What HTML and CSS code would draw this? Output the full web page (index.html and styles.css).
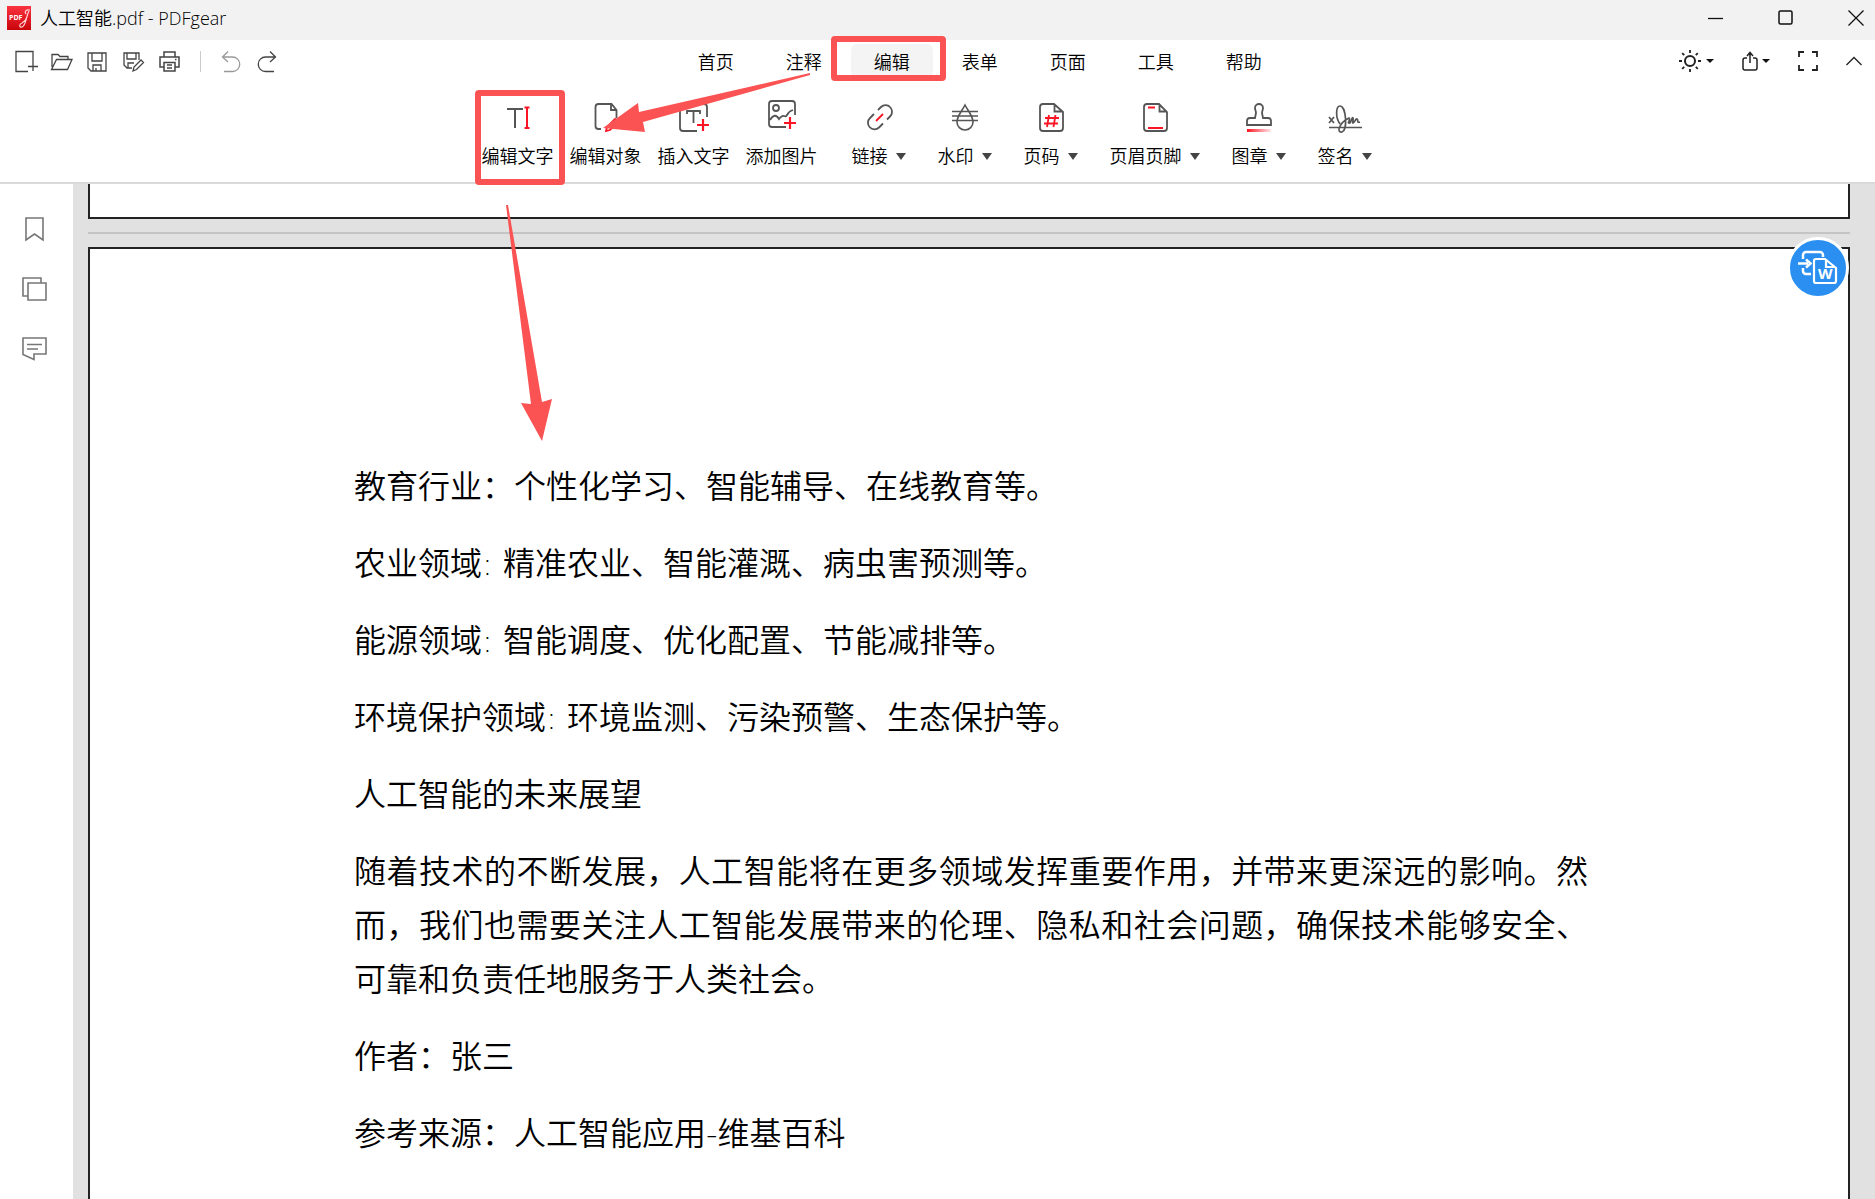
FILE: index.html
```html
<!DOCTYPE html>
<html lang="zh-CN">
<head>
    <meta charset="UTF-8">
    <meta name="viewport" content="width=device-width, initial-scale=1.0">
    <title>人工智能.pdf - PDFgear</title>
    <link rel="stylesheet" href="styles.css">
</head>
<body>

<div class="app">
    <header class="titlebar">
        <svg class="logo" width="24" height="24" viewBox="0 0 24 24">
            <defs>
                <linearGradient id="logo-red" x1="0" y1="0" x2="0" y2="1">
                    <stop offset="0" stop-color="#fb3440"/>
                    <stop offset="1" stop-color="#c90409"/>
                </linearGradient>
            </defs>
            <rect width="24" height="24" fill="url(#logo-red)"/>
            <text x="2" y="14" class="logo-text">PDF</text>
            <path d="M23 4c-4-1-6 2-4 4M22 5c-3 5-3 15-7 16-3 1-3-3 0-4 2-1 4-3 5-6" fill="none" stroke="#ffd5d5" stroke-width="1.2"/>
        </svg>
        <span class="title">人工智能.pdf - PDFgear</span>
        <div class="window-btns">
            <button aria-label="最小化"><svg width="16" height="16"><path d="M0 8.5h15"/></svg></button>
            <button aria-label="最大化"><svg width="16" height="16"><rect x="1" y="1" width="13" height="13" rx="1.5" stroke-width="1.5"/></svg></button>
            <button aria-label="关闭"><svg width="16" height="16"><path d="M.5 .5l15 15M15.5 .5l-15 15"/></svg></button>
        </div>
    </header>

    <div class="menubar">
        <div class="quick">
            <button aria-label="新建"><svg width="24" height="24"><path d="M20 12V2.500H3v20h12M20 12v10M15 17.500h10"/></svg></button>
            <button aria-label="打开"><svg width="24" height="24"><path d="M3 18V5.500h6l2 2h8v3M2.500 20.500l5-10h15.500l-4.500 10z"/></svg></button>
            <button aria-label="保存"><svg width="24" height="24"><path d="M3 4h18v18H6l-3-3zM7 4v8h10V4M8 22v-6h8v6M11 19v3"/></svg></button>
            <button aria-label="另存为"><svg width="24" height="24"><path d="M11 19H6l-3-3V4h15v7M6 4v6h9V4M7 19v-5h6M12 22l1-4 7-7 2.500 2.500-7 7z"/></svg></button>
            <button aria-label="打印"><svg width="24" height="24"><path d="M7 8V3h11v5M7 18H3V8h19v10h-4M7 13.500h11V22H7zM10 16h5M10 19h5M18 10.500h1.500" stroke-width="1.5"/></svg></button>
            <span class="divider"></span>
            <button aria-label="撤销" disabled><svg width="24" height="24"><path d="M9 2.500L3.500 8 9 13M4 8h9.500a7 7 0 010 14.500H5"/></svg></button>
            <button aria-label="重做"><svg width="24" height="24"><path d="M15 2.500L20.500 8 15 13M20 8h-9.500a7 7 0 000 14.500H19"/></svg></button>
        </div>
        <nav class="tabs">
            <button>首页</button>
            <button>注释</button>
            <button class="active">编辑</button>
            <button>表单</button>
            <button>页面</button>
            <button>工具</button>
            <button>帮助</button>
        </nav>
        <div class="view-btns">
            <button aria-label="主题">
                <svg width="24" height="24"><circle cx="12" cy="12" r="5" stroke-width="2"/><path d="M12 1v3M12 20v3M1 12h3M20 12h3M4.200 4.200l2 2M17.800 17.800l2 2M4.200 19.800l2-2M17.800 6.200l2-2" stroke-width="1.8"/></svg>
                <i class="caret small"></i>
            </button>
            <button aria-label="分享">
                <svg width="16" height="20"><path d="M5 7H3a2 2 0 00-2 2v8a2 2 0 002 2h10a2 2 0 002-2V9a2 2 0 00-2-2h-2M8 12V2M5 5l3-3.500L11 5" stroke-width="1.5"/></svg>
                <i class="caret small"></i>
            </button>
            <button aria-label="全屏"><svg width="20" height="20"><path d="M1 6V1h5M14 1h5v5M19 14v5h-5M6 19H1v-5" stroke-width="1.8"/></svg></button>
            <button aria-label="收起"><svg width="16" height="10"><path d="M.5 9L8 1.500 15.500 9"/></svg></button>
        </div>
    </div>

    <div class="ribbon">
        <div class="group">
            <button>
                <svg width="34" height="34"><path d="M6 9h16M14 9v19" stroke-width="2"/><path class="red" d="M23.500 7.500h5M23.500 28h5M26 7.500V28" stroke-width="2"/></svg>
                <span>编辑文字</span>
            </button>
            <button>
                <svg width="34" height="34"><path d="M12 29H9.500a3 3 0 01-3-3V7a3 3 0 013-3h13l5 6v8M22 4v6h6"/><path class="red" d="M17 31l1-4 8-8 3 3-8 8z"/></svg>
                <span>编辑对象</span>
            </button>
            <button>
                <svg width="34" height="34"><path d="M20 31H6a3 3 0 01-3-3V7a3 3 0 013-3h21a3 3 0 013 3v10M10 14v-3h13v3M16.500 11v12"/><path class="red" d="M20 25h12M26 19v12" stroke-width="2.2"/></svg>
                <span>插入文字</span>
            </button>
            <button>
                <svg width="34" height="34"><path d="M21 27H7a3 3 0 01-3-3V4a3 3 0 013-3h20a3 3 0 013 3v11M5 20q5-8 9-1 3-4 5-3 2 1 3-1 2-4 6-5"/><circle cx="11" cy="8" r="3"/><path class="red" d="M19 23h12M25 17v12" stroke-width="2.2"/></svg>
                <span>添加图片</span>
            </button>
        </div>
        <div class="group">
            <button class="drop">
                <svg width="34" height="34"><path d="M16 10l3-3a6.500 6.500 0 019 9.500l-3 3M12 14l-4 4a6.500 6.500 0 009 9.500l4-4"/><path class="red" d="M14 21l7-7"/></svg>
                <span>链接 <i class="caret"></i></span>
            </button>
            <button class="drop">
                <svg width="34" height="34"><path d="M17 5c-3 6-8 11-8 17a8 8 0 0016 0c0-6-5-11-8-17zM4 11.500h26M4 16h26M4 20.500h26" stroke-width="1.6"/></svg>
                <span>水印 <i class="caret"></i></span>
            </button>
            <button class="drop">
                <svg width="34" height="34"><path d="M20 4H9a3 3 0 00-3 3v21a3 3 0 003 3h17a3 3 0 003-3V12zM20.500 4v7.500H29"/><path class="red" d="M15 15l-2 12M21.500 15l-2 12M11 18h14M10 23.500h14" stroke-width="1.8"/></svg>
                <span>页码 <i class="caret"></i></span>
            </button>
            <button class="drop">
                <svg width="34" height="34"><path d="M21 4H9a3 3 0 00-3 3v21a3 3 0 003 3h17a3 3 0 003-3V12zM21.500 4v7.500H29"/><path class="red" d="M10 7.500h7M10 28h15" stroke-width="2"/></svg>
                <span>页眉页脚 <i class="caret"></i></span>
            </button>
            <button class="drop">
                <svg width="34" height="34">
                    <defs>
                        <linearGradient id="stamp-red">
                            <stop offset="0" stop-color="#fb1424"/>
                            <stop offset="1" stop-color="#fb1424" stop-opacity=".1"/>
                        </linearGradient>
                    </defs>
                    <path d="M14 13c0-2-1-3-1-5a4 4 0 018 0c0 2-1 3-1 5l1 5h5a3 3 0 013 3v4H5v-4a3 3 0 013-3h5z"/>
                    <rect x="5" y="29" width="24" height="3" fill="url(#stamp-red)" stroke="none"/>
                </svg>
                <span>图章 <i class="caret"></i></span>
            </button>
            <button class="drop">
                <svg width="34" height="34"><path d="M1 27.500h33M1 17l5 6M6 17l-5 6M12 24C7 17 8 6 12 6c6 0 8 24 2 26-6 1-3-9 7-14 2 2-2 5 0 5 2 1 3-7 4-5 1 1-1 5 0 5 2-1 3-5 4-4 2 1-1 4 3 3" stroke-width="1.7"/></svg>
                <span>签名 <i class="caret"></i></span>
            </button>
        </div>
    </div>

    <div class="workspace">
        <aside class="sidebar">
            <button aria-label="书签"><svg width="26" height="26"><path d="M5 2h17v22l-8.500-6L5 24z"/></svg></button>
            <button aria-label="缩略图"><svg width="26" height="26"><path d="M7 20H2V2h18v5M7 7h18v17H7z"/></svg></button>
            <button aria-label="批注"><svg width="26" height="26"><path d="M2 2h23v16H13v5.500L2 18.500zM6 8.500h15M6 13h11"/></svg></button>
        </aside>
        <main class="canvas">
            <div class="page page-prev"></div>
            <hr>
            <article class="page">
                <p>教育行业：个性化学习、智能辅导、在线教育等。</p>
                <p>农业领域: 精准农业、智能灌溉、病虫害预测等。</p>
                <p>能源领域: 智能调度、优化配置、节能减排等。</p>
                <p>环境保护领域: 环境监测、污染预警、生态保护等。</p>
                <p>人工智能的未来展望</p>
                <p>随着技术的不断发展，人工智能将在更多领域发挥重要作用，并带来更深远的影响。然而，我们也需要关注人工智能发展带来的伦理、隐私和社会问题，确保技术能够安全、可靠和负责任地服务于人类社会。</p>
                <p>作者：张三</p>
                <p>参考来源：人工智能应用-维基百科</p>
            </article>
            <button class="convert" aria-label="转换为 Word">
                <svg width="42" height="36">
                    <path d="M6 9V5a3 3 0 013-3h14a3 3 0 013 3v2M6 18v3a3 3 0 003 3h5M1 13.500h10M9 9.500l4.500 4-4.500 4" stroke-width="2.5"/>
                    <path d="M28 9H19a2 2 0 00-2 2v20a2 2 0 002 2h18a2 2 0 002-2V18zM29 9v8h9" stroke-width="2.2"/>
                    <text x="21" y="29" class="convert-w">W</text>
                </svg>
            </button>
        </main>
    </div>
</div>

<!-- 标注 -->
<svg class="marks" width="960" height="450">
    <rect x="478" y="93" width="84" height="89" rx="1"/>
    <rect x="834" y="39" width="109" height="39" rx="1"/>
    <path d="M810 73L639 112 638 103 603 128 645 132 643 122 810 75z"/>
    <path d="M506 205L531 404 521 403 542 441 552 399 542 402 508 205z"/>
</svg>

</body>
</html>
```
FILE: styles.css
```css
* {
    box-sizing: border-box;
}
body {
    margin: 0;
    font-family: "Open Sans", "Noto Sans CJK SC", sans-serif;
    font-size: 18px;
    color: #000;
}
button {
    display: flex;
    align-items: center;
    justify-content: center;
    padding: 0;
    border: none;
    background: none;
    font: inherit;
    color: inherit;
    cursor: pointer;
}
svg {
    display: block;
    overflow: visible;
    fill: none;
    stroke: #444;
    stroke-width: 1.3;
}
svg text {
    stroke: none;
    fill: #fff;
}
.app {
    display: flex;
    flex-direction: column;
    height: 100vh;
    overflow: hidden;
}

/* 标题栏 */
.titlebar {
    display: flex;
    align-items: center;
    flex: none;
    height: 40px;
    padding: 0 11px 5px 7px;
    background: #f2f2f2;
}
.logo {
    stroke: none;
}
.logo-text {
    font-family: "Open Sans", sans-serif;
    font-size: 7px;
    font-weight: 700;
}
.title {
    margin-left: 9px;
    font-weight: 350;
    line-height: 24px;
}
.window-btns {
    display: flex;
    gap: 54px;
    margin-left: auto;
}
.window-btns svg {
    stroke: #111;
}

/* 菜单 */
.menubar {
    display: grid;
    grid-template-columns: 8fr auto 7fr;
    align-items: center;
    flex: none;
    height: 42px;
    background: #fff;
}
.quick {
    display: flex;
    align-items: center;
    gap: 12px;
    padding-left: 13px;
}
.quick button:disabled svg {
    stroke: #999;
}
.divider {
    width: 1px;
    height: 21px;
    margin: 0 6px 0 7px;
    background: #ccc;
}
.tabs {
    display: flex;
    gap: 6px;
}
.tabs button {
    width: 82px;
    height: 34px;
    border-radius: 6px;
    font-weight: 350;
}
.tabs .active {
    background: #f4f4f4;
}
.view-btns {
    display: flex;
    align-items: center;
    justify-content: flex-end;
    gap: 28px;
    padding-right: 13px;
}
.view-btns button {
    gap: 4px;
}
.view-btns svg {
    stroke: #222;
}
.caret {
    display: inline-block;
    border: 5px solid transparent;
    border-top: 7px solid #444;
    border-bottom: 0;
}
.caret.small {
    border-width: 4px 4px 0;
    border-top-color: #111;
}

/* 功能区 */
.ribbon {
    display: flex;
    justify-content: center;
    gap: 14px;
    flex: none;
    height: 102px;
    padding: 18px 14px 0 0;
    border-bottom: 2px solid #d9d9d9;
    background: #fff;
}
.group {
    display: flex;
    gap: 4px;
}
.ribbon button {
    flex-direction: column;
    justify-content: flex-start;
    gap: 8px;
    height: 80px;
    padding: 0 6px;
    font-weight: 350;
    line-height: 28px;
}
.ribbon .drop {
    padding: 0 14px;
}
.ribbon span {
    display: flex;
    align-items: center;
    gap: 8px;
}
.ribbon svg {
    stroke: #555;
    stroke-width: 1.8;
}
.ribbon .red {
    stroke: #fb1424;
}

/* 文档区 */
.workspace {
    display: flex;
    flex: 1;
    min-height: 0;
}
.sidebar {
    display: flex;
    flex-direction: column;
    align-items: center;
    gap: 34px;
    width: 73px;
    padding: 32px 5px 0 0;
    background: #fff;
}
.sidebar svg {
    stroke: #777;
    stroke-width: 1.6;
}
.canvas {
    position: relative;
    display: flex;
    flex-direction: column;
    flex: 1;
    padding: 0 25px 0 15px;
    overflow: hidden;
    background: #e1e1e1;
}
.page {
    flex: none;
    min-height: 2400px;
    padding: 211px 260px 0 264px;
    border: 2px solid #222;
    background: #fff;
    font-family: "DejaVu Sans", "Noto Sans CJK SC", sans-serif;
    font-size: 32px;
    font-weight: 350;
    line-height: 54px;
}
.page-prev {
    min-height: 0;
    height: 35px;
    padding: 0;
    border-top: none;
}
.page p {
    margin: 0 0 23px;
    text-align: justify;
}
.canvas hr {
    flex: none;
    width: 100%;
    height: 2px;
    margin: 13px 0;
    border: none;
    background: #c4c4c4;
}
.convert {
    position: absolute;
    top: 53px;
    right: 26px;
    width: 62px;
    height: 62px;
    border: 3px solid #fff;
    border-radius: 50%;
    background: #2a8ff0;
}
.convert svg {
    stroke: #fff;
}
.convert-w {
    font-family: "Open Sans", sans-serif;
    font-size: 15px;
    font-weight: 700;
}

.marks {
    position: absolute;
    top: 0;
    left: 0;
    pointer-events: none;
    stroke: none;
}
.marks rect {
    stroke: #fb5353;
    stroke-width: 6;
}
.marks path {
    fill: #fb5353;
}
```
